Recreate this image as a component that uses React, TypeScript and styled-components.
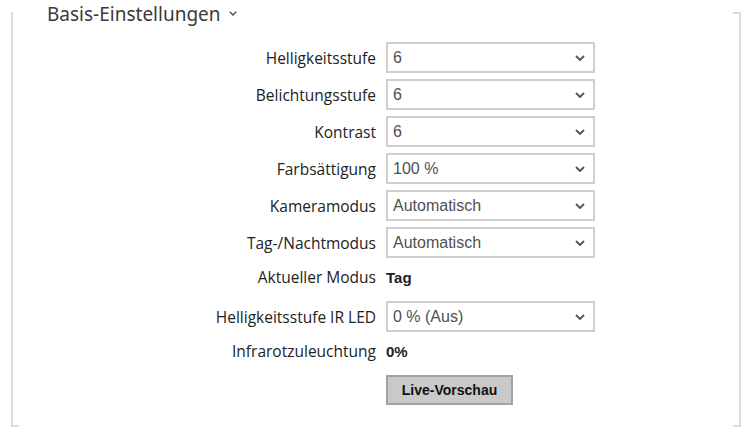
import React from "react";
import styled, { createGlobalStyle } from "styled-components";

const Global = createGlobalStyle`
  html, body { margin: 0; padding: 0; background: #fff; }
  body { font-family: "Open Sans", "Noto Sans", sans-serif; color: #222; }
`;

const line = "#dcdcdc";

const Frame = styled.section`
  box-sizing: border-box;
  display: flex;
  flex-direction: column;
  margin: 12px 9px 0 11px;
  height: 415px;
  border-left: 2px solid ${line};
  border-right: 2px solid ${line};
  background-image:
    linear-gradient(${line}, ${line}),
    linear-gradient(${line}, ${line}),
    linear-gradient(${line}, ${line}),
    linear-gradient(${line}, ${line});
  background-size: 6px 2px;
  background-repeat: no-repeat;
  background-origin: padding-box;
  background-position: left top, right top, left bottom, right bottom;
`;

const Title = styled.h2`
  align-self: flex-start;
  margin: -12px 0 0 0;
  padding: 0 6px 0 34px;
  height: 27px;
  display: flex;
  align-items: center;
  gap: 8px;
  font-family: "Noto Sans", "Open Sans", sans-serif;
  font-weight: 400;
  font-size: 19px;
  color: #3a3a3a;
  background: #fff;
`;

const Form = styled.div`
  display: grid;
  grid-template-columns: 363px 209px;
  column-gap: 10px;
  row-gap: 6px;
  grid-auto-rows: 31px;
  margin-top: 15px;
`;

const Label = styled.div<{ $lift?: boolean }>`
  text-align: right;
  align-self: center;
  font-size: 15.5px;
  color: #222;
  white-space: nowrap;
  margin-top: ${(p) => (p.$lift ? "-5px" : "0")};
`;

const Value = styled.div<{ $lift?: boolean }>`
  align-self: center;
  font-family: "Liberation Sans", Arial, sans-serif;
  font-weight: 700;
  font-size: 15px;
  color: #222;
  margin-top: ${(p) => (p.$lift ? "-5px" : "0")};
`;

const SelectBox = styled.div`
  box-sizing: border-box;
  height: 31px;
  border: 2px solid #cfcfcf;
  display: flex;
  align-items: center;
  justify-content: space-between;
  padding: 0 8px 0 5px;
  font-family: "Liberation Sans", Arial, sans-serif;
  font-size: 16px;
  color: #505050;
  background: #fff;
`;

const Button = styled.button`
  grid-column: 2;
  justify-self: start;
  box-sizing: border-box;
  height: 30px;
  width: 127px;
  border: 2px solid #a3a3a3;
  background: #c9c9c9;
  font-family: "Liberation Sans", Arial, sans-serif;
  font-weight: 700;
  font-size: 14px;
  color: #111;
  padding: 0;
  cursor: pointer;
`;

const Chevron = ({ size = 10 }: { size?: number }) => (
  <svg width={size} height={size * 0.6} viewBox="0 0 10 6" fill="none">
    <path d="M1 1 L5 5 L9 1" stroke="#555" strokeWidth="1.9" />
  </svg>
);

const Select = ({ value }: { value: string }) => (
  <SelectBox>
    <span>{value}</span>
    <Chevron />
  </SelectBox>
);

const rows: [string, string][] = [
  ["Helligkeitsstufe", "6"],
  ["Belichtungsstufe", "6"],
  ["Kontrast", "6"],
  ["Farbsättigung", "100 %"],
  ["Kameramodus", "Automatisch"],
  ["Tag-/Nachtmodus", "Automatisch"],
];

export default function App() {
  return (
    <>
      <Global />
      <Frame>
        <Title>
          Basis-Einstellungen
          <Chevron size={8} />
        </Title>
        <Form>
          {rows.map(([l, v]) => (
            <React.Fragment key={l}>
              <Label>{l}</Label>
              <Select value={v} />
            </React.Fragment>
          ))}
          <Label $lift>Aktueller Modus</Label>
          <Value $lift>Tag</Value>
          <Label>Helligkeitsstufe IR LED</Label>
          <Select value="0 % (Aus)" />
          <Label $lift>Infrarotzuleuchtung</Label>
          <Value $lift>0%</Value>
          <Button>Live-Vorschau</Button>
        </Form>
      </Frame>
    </>
  );
}
